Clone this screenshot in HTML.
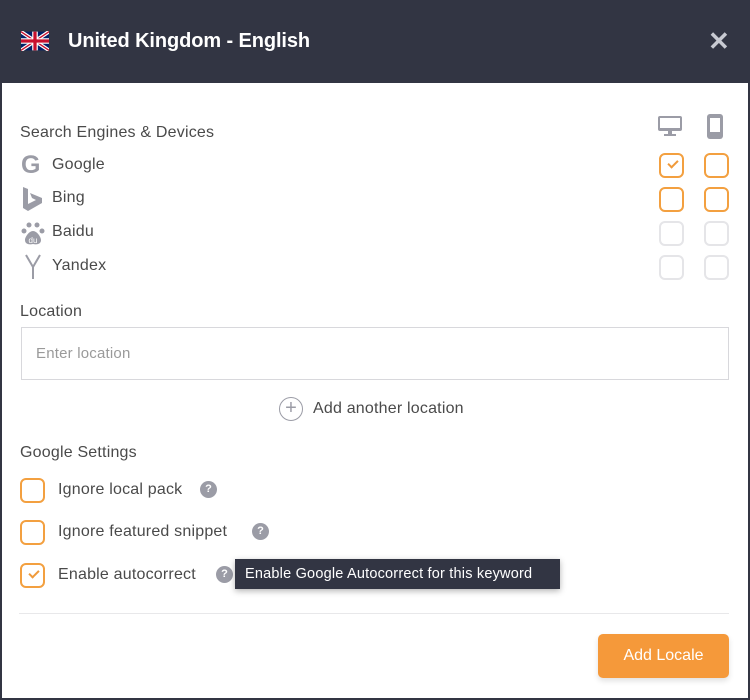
<!DOCTYPE html>
<html><head><meta charset="utf-8"><style>
*{box-sizing:border-box;margin:0;padding:0}
body{width:750px;height:700px;background:#fff;font-family:"Liberation Sans",sans-serif;color:#4a4a4a;position:relative;overflow:hidden}
.frame{position:absolute;left:0;top:0;width:750px;height:700px;border:2px solid #323543}
.hdr{position:absolute;left:0;top:0;width:750px;height:83px;background:#323543}
.hdr .t{position:absolute;left:68px;top:30px;color:#fff;font-size:20px;font-weight:bold;letter-spacing:-0.1px}
.x{position:absolute;left:708px;top:30px;color:#c8cad2;font-size:26px;font-weight:bold;line-height:22px}
.a{position:absolute;font-size:16px;white-space:nowrap;letter-spacing:0.2px}
.cb{position:absolute;width:25px;height:25px;border:2px solid #f3a040;border-radius:6px}
.cb.g{border-color:#e5e5e8}
.ck::after{content:"";position:absolute;left:7px;top:5px;width:8px;height:4px;border-left:2px solid #f09a3a;border-bottom:2px solid #f09a3a;transform:rotate(-45deg)}
.q{position:absolute;width:17px;height:17px;border-radius:50%;background:#9b9ca6;color:#fff;font-size:11px;font-weight:bold;text-align:center;line-height:17px}
</style></head><body>
<div class="frame"></div>
<div class="hdr">
<svg style="position:absolute;left:21px;top:31px" width="28" height="20" viewBox="0 0 60 40"><rect width="60" height="40" fill="#012169"/><path d="M0 0L60 40M60 0L0 40" stroke="#fff" stroke-width="8"/><path d="M0 0L60 40M60 0L0 40" stroke="#c8102e" stroke-width="3"/><path d="M30 0V40M0 20H60" stroke="#fff" stroke-width="12"/><path d="M30 0V40M0 20H60" stroke="#c8102e" stroke-width="7"/></svg>
<div class="t">United Kingdom - English</div>
<div class="x">✕</div>
</div>
<div class="a" style="left:20px;top:124px">Search Engines &amp; Devices</div>
<svg style="position:absolute;left:657px;top:115px" width="26" height="22" viewBox="0 0 26 22"><rect x="1" y="1" width="24" height="15" rx="2" fill="#9b9ca6"/><rect x="3" y="3" width="20" height="10" fill="#fff"/><rect x="11" y="16" width="4" height="3" fill="#9b9ca6"/><rect x="7" y="19" width="12" height="2" fill="#9b9ca6"/></svg>
<svg style="position:absolute;left:707px;top:114px" width="16" height="25" viewBox="0 0 16 25"><rect x="0" y="0" width="16" height="25" rx="3" fill="#9b9ca6"/><rect x="3" y="4" width="10" height="14" fill="#fff"/></svg>
<div class="a" style="left:21px;top:151px;font-size:25px;font-weight:bold;color:#9b9ca6">G</div>
<div class="a" style="left:52px;top:156px">Google</div>
<svg style="position:absolute;left:23px;top:187px" width="20" height="24" viewBox="0 0 20 24"><path d="M0 0L5 2V17L13 13L9 11L7 6L19 11V16L5 24L0 21Z" fill="#9b9ca6"/></svg>
<div class="a" style="left:52px;top:189px">Bing</div>
<svg style="position:absolute;left:21px;top:221px" width="24" height="24" viewBox="0 0 24 24" fill="#9b9ca6"><circle cx="8" cy="4" r="2.5"/><circle cx="16" cy="4" r="2.5"/><circle cx="3" cy="10" r="2.5"/><circle cx="21" cy="10" r="2.5"/><path d="M12 10C8 10 4 16 4 19C4 23 8 24 12 23C16 24 20 23 20 19C20 16 16 10 12 10Z"/><text x="12" y="22" font-size="8" fill="#fff" text-anchor="middle" font-family="Liberation Sans">du</text></svg>
<div class="a" style="left:52px;top:223px">Baidu</div>
<svg style="position:absolute;left:24px;top:254px" width="18" height="26" viewBox="0 0 18 26"><path d="M2 1L9 13V25M16 1L9 13" stroke="#9b9ca6" stroke-width="2" fill="none"/></svg>
<div class="a" style="left:52px;top:257px">Yandex</div>
<div class="cb ck" style="left:659px;top:153px"></div><div class="cb" style="left:704px;top:153px"></div>
<div class="cb" style="left:659px;top:187px"></div><div class="cb" style="left:704px;top:187px"></div>
<div class="cb g" style="left:659px;top:221px"></div><div class="cb g" style="left:704px;top:221px"></div>
<div class="cb g" style="left:659px;top:255px"></div><div class="cb g" style="left:704px;top:255px"></div>
<div class="a" style="left:20px;top:303px">Location</div>
<div style="position:absolute;left:21px;top:327px;width:708px;height:53px;border:1px solid #d8d8dc"></div>
<div class="a" style="left:36px;top:345px;font-size:15px;color:#9a9a9a">Enter location</div>
<div style="position:absolute;left:279px;top:397px;width:24px;height:24px;border:1.5px solid #9b9ca6;border-radius:50%;color:#9b9ca6;text-align:center;line-height:21px;font-size:20px">+</div>
<div class="a" style="left:313px;top:400px">Add another location</div>
<div class="a" style="left:20px;top:444px">Google Settings</div>
<div class="cb" style="left:20px;top:478px"></div><div class="a" style="left:58px;top:481px">Ignore local pack</div><div class="q" style="left:200px;top:481px">?</div>
<div class="cb" style="left:20px;top:520px"></div><div class="a" style="left:58px;top:523px">Ignore featured snippet</div><div class="q" style="left:252px;top:523px">?</div>
<div class="cb ck" style="left:20px;top:563px"></div><div class="a" style="left:58px;top:566px">Enable autocorrect</div><div class="q" style="left:216px;top:566px">?</div>
<div style="position:absolute;left:235px;top:559px;width:325px;height:30px;background:#323543;color:#fff;font-size:14.5px;line-height:30px;padding-left:10px;box-shadow:0 2px 6px rgba(0,0,0,.3);white-space:nowrap;letter-spacing:0.2px">Enable Google Autocorrect for this keyword</div>
<div style="position:absolute;left:19px;top:613px;width:710px;height:1px;background:#e8e8ea"></div>
<div style="position:absolute;left:598px;top:634px;width:131px;height:44px;background:#f5993a;border-radius:5px;color:#fff;font-size:16px;text-align:center;line-height:44px;box-shadow:0 3px 6px rgba(0,0,0,.12)">Add Locale</div>
</body></html>
